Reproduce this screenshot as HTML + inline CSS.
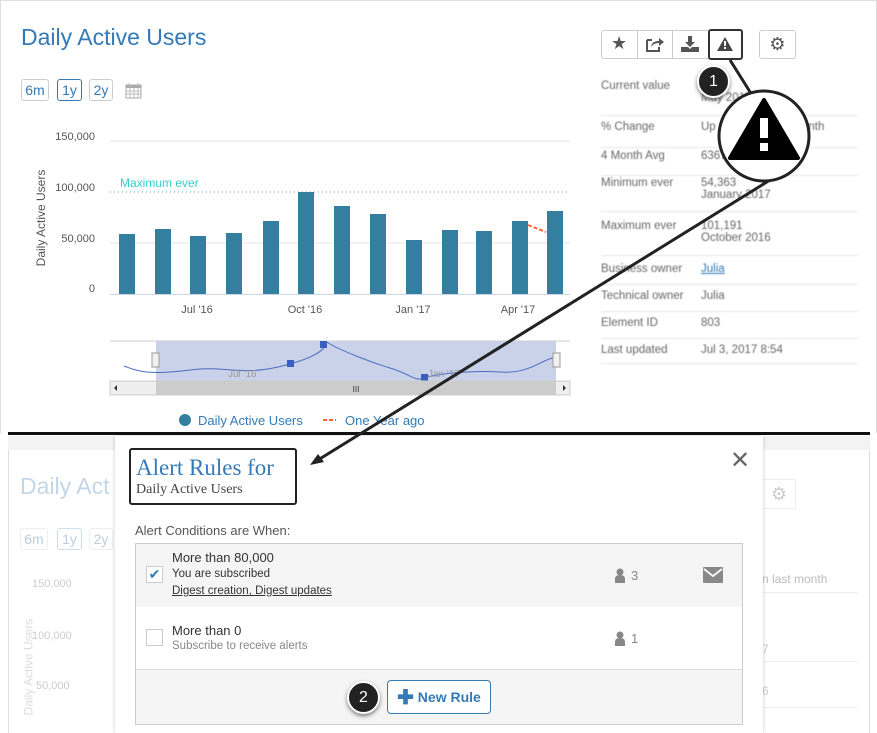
<!DOCTYPE html>
<html><head><style>
*{margin:0;padding:0;box-sizing:border-box}
body{width:877px;height:733px;overflow:hidden;background:#fff;font-family:"Liberation Sans",sans-serif;position:relative}
.a{position:absolute}
.t{color:#555;font-size:12px}
.btn{position:absolute;border:1px solid #ccc;border-radius:3px;font-size:14px;color:#337ab7;text-align:center;background:#fff}
.row{position:absolute;left:601px;width:257px;border-bottom:1px solid #e8e8e8;font-size:11.5px;color:#666;filter:blur(0.6px)}
.row span{position:absolute;left:100px}
</style></head><body>
<div class="a" style="left:0;top:0;width:877px;height:433px;border:1px solid #ddd;border-bottom:none"></div>
<div class="a" style="left:21px;top:24px;font-size:23px;color:#337ab7">Daily Active Users</div>
<div class="btn" style="left:21px;top:79px;width:28px;height:22px;line-height:20px">6m</div>
<div class="btn" style="left:57px;top:79px;width:25px;height:22px;line-height:20px;border-color:#337ab7">1y</div>
<div class="btn" style="left:89px;top:79px;width:24px;height:22px;line-height:20px">2y</div>
<svg class="a" style="left:125px;top:82px" width="17" height="17"><rect x="1" y="3" width="15" height="13" fill="none" stroke="#aaa"/><rect x="1" y="3" width="15" height="3" fill="#aaa"/><path d="M4 1v4M13 1v4M1 9h15M1 12h15M5 6v10M9 6v10M13 6v10" stroke="#bbb"/></svg>
<svg class="a" style="left:0;top:0" width="600" height="433" font-family="Liberation Sans" font-size="11">
<g fill="#555" text-anchor="end"><text x="95" y="140">150,000</text><text x="95" y="191">100,000</text><text x="95" y="242">50,000</text><text x="95" y="292">0</text></g>
<text transform="translate(45,218) rotate(-90)" text-anchor="middle" font-size="12" fill="#555">Daily Active Users</text>
<line x1="110" y1="141" x2="570" y2="141" stroke="#e6e6e6"/>
<line x1="110" y1="243" x2="570" y2="243" stroke="#e6e6e6"/>
<line x1="110" y1="192" x2="570" y2="192" stroke="#4ab" stroke-dasharray="1,3"/>
<text x="120" y="187" fill="#3cc" font-size="12">Maximum ever</text>
<g fill="#347f9f">
<rect x="119" y="234" width="16" height="60"/><rect x="155" y="229" width="16" height="65"/><rect x="190" y="236" width="16" height="58"/><rect x="226" y="233" width="16" height="61"/><rect x="263" y="221" width="16" height="73"/><rect x="298" y="192" width="16" height="102"/><rect x="334" y="206" width="16" height="88"/><rect x="370" y="214" width="16" height="80"/><rect x="406" y="240" width="16" height="54"/><rect x="442" y="230" width="16" height="64"/><rect x="476" y="231" width="16" height="63"/><rect x="512" y="221" width="16" height="73"/><rect x="547" y="211" width="16" height="83"/></g>
<path d="M528 225L546 232" stroke="#f63" stroke-width="2" stroke-dasharray="4,2"/>
<line x1="110" y1="294.5" x2="570" y2="294.5" stroke="#ccd6eb"/>
<g fill="#555" text-anchor="middle" font-size="11"><text x="197" y="313">Jul '16</text><text x="305" y="313">Oct '16</text><text x="413" y="313">Jan '17</text><text x="518" y="313">Apr '17</text></g>
<line x1="110" y1="341" x2="570" y2="341" stroke="#ccc"/>
<rect x="156" y="341" width="400" height="40" fill="#c9d2e9"/>
<path d="M124 366C140 372 150 375 190 370S240 378 290 364S320 338 330 344S370 362 390 368S415 382 425 378S470 370 500 372S540 360 556 357" fill="none" stroke="#4b6dc0"/>
<g fill="#3b5fbf"><rect x="287" y="360" width="7" height="7"/><rect x="320" y="341" width="7" height="7"/><rect x="421" y="374" width="7" height="7"/></g>
<text x="228" y="377" fill="#999" font-size="10">Jul '16</text><text x="428" y="377" fill="#999" font-size="10">Jan '17</text>
<rect x="152" y="353" width="7" height="14" fill="#f2f2f2" stroke="#999"/><rect x="553" y="353" width="7" height="14" fill="#f2f2f2" stroke="#999"/>
<rect x="110" y="381" width="460" height="14" fill="#eee" stroke="#ccc"/>
<rect x="156" y="381" width="400" height="14" fill="#ccc"/>
<path d="M117 385v6l-3-3z M563 385v6l3-3z" fill="#333"/>
<text x="356" y="392" font-size="8" fill="#333" text-anchor="middle">III</text>
<circle cx="185" cy="420" r="6" fill="#347f9f"/>
<text x="198" y="425" fill="#337ab7" font-size="13">Daily Active Users</text>
<path d="M323 420h13" stroke="#f63" stroke-width="2" stroke-dasharray="4,2"/>
<text x="345" y="425" fill="#337ab7" font-size="13">One Year ago</text>
</svg>
<!-- toolbar -->
<div class="a" style="left:601px;top:30px;width:141px;height:29px;border:1px solid #ccc;border-radius:3px"></div>
<div class="a" style="left:637px;top:30px;width:1px;height:29px;background:#ccc"></div>
<div class="a" style="left:672px;top:30px;width:1px;height:29px;background:#ccc"></div>
<div class="a" style="left:708px;top:29px;width:35px;height:31px;border:2px solid #333;border-radius:3px;background:#fff"></div>
<div class="a" style="left:611px;top:33px;font-size:18px;color:#555">★</div>
<svg class="a" style="left:645px;top:35px" width="20" height="18"><path d="M2 5h5M2 5v11h12v-4" fill="none" stroke="#555" stroke-width="2"/><path d="M6 12c1-5 4-6 8-6v-3l5 4-5 4v-3c-3 0-6 1-8 4z" fill="#555"/></svg>
<svg class="a" style="left:680px;top:34px" width="20" height="20"><path d="M8 2h4v6h3l-5 5-5-5h3z M1 13h7l2 2 2-2h7v5H1z" fill="#555"/></svg>
<svg class="a" style="left:716px;top:36px" width="18" height="16"><path d="M9 1L17 15H1z" fill="#444"/><rect x="8" y="5" width="2" height="5" fill="#fff"/><rect x="8" y="11" width="2" height="2" fill="#fff"/></svg>
<div class="a" style="left:759px;top:30px;width:37px;height:29px;border:1px solid #ccc;border-radius:3px;text-align:center;font-size:18px;line-height:27px;color:#555">⚙</div>
<div class="row" style="top:80px;height:36px"><div style="padding-top:0">Current value</div><span style="top:0">..,..0<br>May 2017</span></div>
<div class="row" style="top:121px;height:27px">% Change<span>Up 13% from last month</span></div>
<div class="row" style="top:150px;height:26px">4 Month Avg<span>63675.25</span></div>
<div class="row" style="top:177px;height:35px">Minimum ever<span>54,363<br>January 2017</span></div>
<div class="row" style="top:220px;height:36px">Maximum ever<span>101,191<br>October 2016</span></div>
<div class="row" style="top:263px;height:22px">Business owner<span style="color:#337ab7;text-decoration:underline">Julia</span></div>
<div class="row" style="top:290px;height:22px">Technical owner<span>Julia</span></div>
<div class="row" style="top:317px;height:22px">Element ID<span>803</span></div>
<div class="row" style="top:344px;height:20px">Last updated<span>Jul 3, 2017 8:54</span></div>
<!-- bottom faded background -->
<div class="a" style="left:8px;top:436px;width:862px;height:297px;background:#fff;border-left:1px solid #ddd;border-right:1px solid #ddd"></div>
<div class="a" style="left:8px;top:436px;width:862px;height:14px;background:#f3f3f3"></div>
<div class="a" style="left:20px;top:473px;font-size:23px;color:#c3d6e8">Daily Act</div>
<div class="btn" style="left:20px;top:528px;width:28px;height:22px;line-height:20px;color:#bcd;border-color:#eee">6m</div>
<div class="btn" style="left:57px;top:528px;width:25px;height:22px;line-height:20px;color:#bcd;border-color:#cde">1y</div>
<div class="btn" style="left:89px;top:528px;width:24px;height:22px;line-height:20px;color:#bcd;border-color:#eee">2y</div>
<div class="a" style="left:32px;top:578px;font-size:11px;color:#ccc">150,000</div>
<div class="a" style="left:32px;top:630px;font-size:11px;color:#ccc">100,000</div>
<div class="a" style="left:36px;top:680px;font-size:11px;color:#ccc">50,000</div>
<div class="a" style="left:-20px;top:660px;transform:rotate(-90deg);font-size:12px;color:#ddd">Daily Active Users</div>
<div class="a" style="left:762px;top:479px;width:34px;height:30px;border:1px solid #eee;color:#ccc;font-size:18px;text-align:center;line-height:28px">⚙</div>
<div class="a" style="left:762px;top:567px;width:96px;border-bottom:1px solid #eee;height:26px;font-size:12px;color:#bbb;padding-top:5px">n last month</div>
<div class="a" style="left:762px;top:620px;width:96px;border-bottom:1px solid #eee;height:42px;font-size:12px;color:#ccc;padding-top:22px">7</div>
<div class="a" style="left:762px;top:664px;width:96px;border-bottom:1px solid #eee;height:44px;font-size:12px;color:#ccc;padding-top:20px">6</div>
<!-- modal -->
<div class="a" style="left:115px;top:436px;width:648px;height:297px;background:#fff;box-shadow:0 0 4px rgba(0,0,0,.2)"></div>
<div class="a" style="left:129px;top:448px;width:168px;height:57px;border:2px solid #222;border-radius:3px;padding:5px 0 0 5px;font-family:'Liberation Serif',serif">
<div style="font-size:23px;color:#337ab7;line-height:26px">Alert Rules for</div>
<div style="font-size:14px;color:#444;line-height:18px">Daily Active Users</div></div>
<div class="a" style="left:730px;top:446px;font-size:24px;color:#666">✕</div>
<div class="a" style="left:135px;top:523px;font-size:13px;color:#555">Alert Conditions are When:</div>
<div class="a" style="left:135px;top:543px;width:608px;height:182px;border:1px solid #ccc"></div>
<div class="a" style="left:136px;top:544px;width:606px;height:63px;background:#f5f5f5"></div>
<div class="a" style="left:136px;top:669px;width:606px;height:55px;background:#f5f5f5;border-top:1px solid #ddd"></div>
<div class="a" style="left:146px;top:566px;width:17px;height:17px;border:1px solid #ccc;background:#fff;color:#337ab7;font-size:14px;line-height:15px;text-align:center">✔</div>
<div class="a" style="left:172px;top:550px;font-size:13px;color:#333">More than 80,000</div>
<div class="a" style="left:172px;top:568px;font-size:11.5px;color:#333">You are subscribed</div>
<div class="a" style="left:172px;top:585px;font-size:11.5px;color:#333;text-decoration:underline">Digest creation, Digest updates</div>
<div class="a" style="left:146px;top:629px;width:17px;height:17px;border:1px solid #ccc;background:#fff"></div>
<div class="a" style="left:172px;top:623px;font-size:13px;color:#333">More than 0</div>
<div class="a" style="left:172px;top:640px;font-size:11.5px;color:#888">Subscribe to receive alerts</div>
<svg class="a" style="left:614px;top:568px" width="14" height="15"><circle cx="6" cy="4" r="3.5" fill="#888"/><path d="M1 15v-4c0-3 2-4 5-4s5 1 5 4v4z" fill="#888"/></svg>
<div class="a" style="left:631px;top:568px;font-size:13px;color:#888">3</div>
<svg class="a" style="left:614px;top:631px" width="14" height="15"><circle cx="6" cy="4" r="3.5" fill="#888"/><path d="M1 15v-4c0-3 2-4 5-4s5 1 5 4v4z" fill="#888"/></svg>
<div class="a" style="left:631px;top:631px;font-size:13px;color:#888">1</div>
<svg class="a" style="left:703px;top:567px" width="20" height="16"><rect width="20" height="16" rx="1" fill="#888"/><path d="M1 2l9 7 9-7" fill="none" stroke="#f5f5f5" stroke-width="2"/></svg>
<div class="a" style="left:387px;top:680px;width:104px;height:34px;border:1px solid #337ab7;border-radius:4px;background:#fff;color:#337ab7;font-size:14px;font-weight:bold;line-height:32px;text-align:center"><span style="font-size:20px;vertical-align:-2px">✚</span> New Rule</div>
<div class="a" style="left:347px;top:681px;width:33px;height:33px;border-radius:50%;background:#222;border:2px solid #fff;box-shadow:0 2px 4px rgba(0,0,0,.5);color:#fff;font-size:16px;text-align:center;line-height:29px">2</div>
<!-- annotations -->
<div class="a" style="left:8px;top:432px;width:862px;height:3px;background:#111"></div>
<svg class="a" style="left:0;top:0" width="877" height="733">
<line x1="730" y1="60" x2="752" y2="95" stroke="#222" stroke-width="3"/>
<line x1="770" y1="180" x2="318" y2="460" stroke="#222" stroke-width="3"/>
<path d="M310 465l14-3-6-8z" fill="#222"/>
<circle cx="764" cy="136" r="45" fill="#fff" stroke="#222" stroke-width="3"/>
<path d="M764 100L798 158H730z" fill="#000" stroke="#000" stroke-width="4" stroke-linejoin="round"/>
<rect x="760" y="118" width="8" height="20" fill="#fff"/><rect x="760" y="143" width="8" height="8" fill="#fff"/>
</svg>
<div class="a" style="left:697px;top:65px;width:33px;height:33px;border-radius:50%;background:#222;border:2px solid #fff;box-shadow:0 2px 4px rgba(0,0,0,.5);color:#fff;font-size:16px;text-align:center;line-height:29px">1</div>
</body></html>
